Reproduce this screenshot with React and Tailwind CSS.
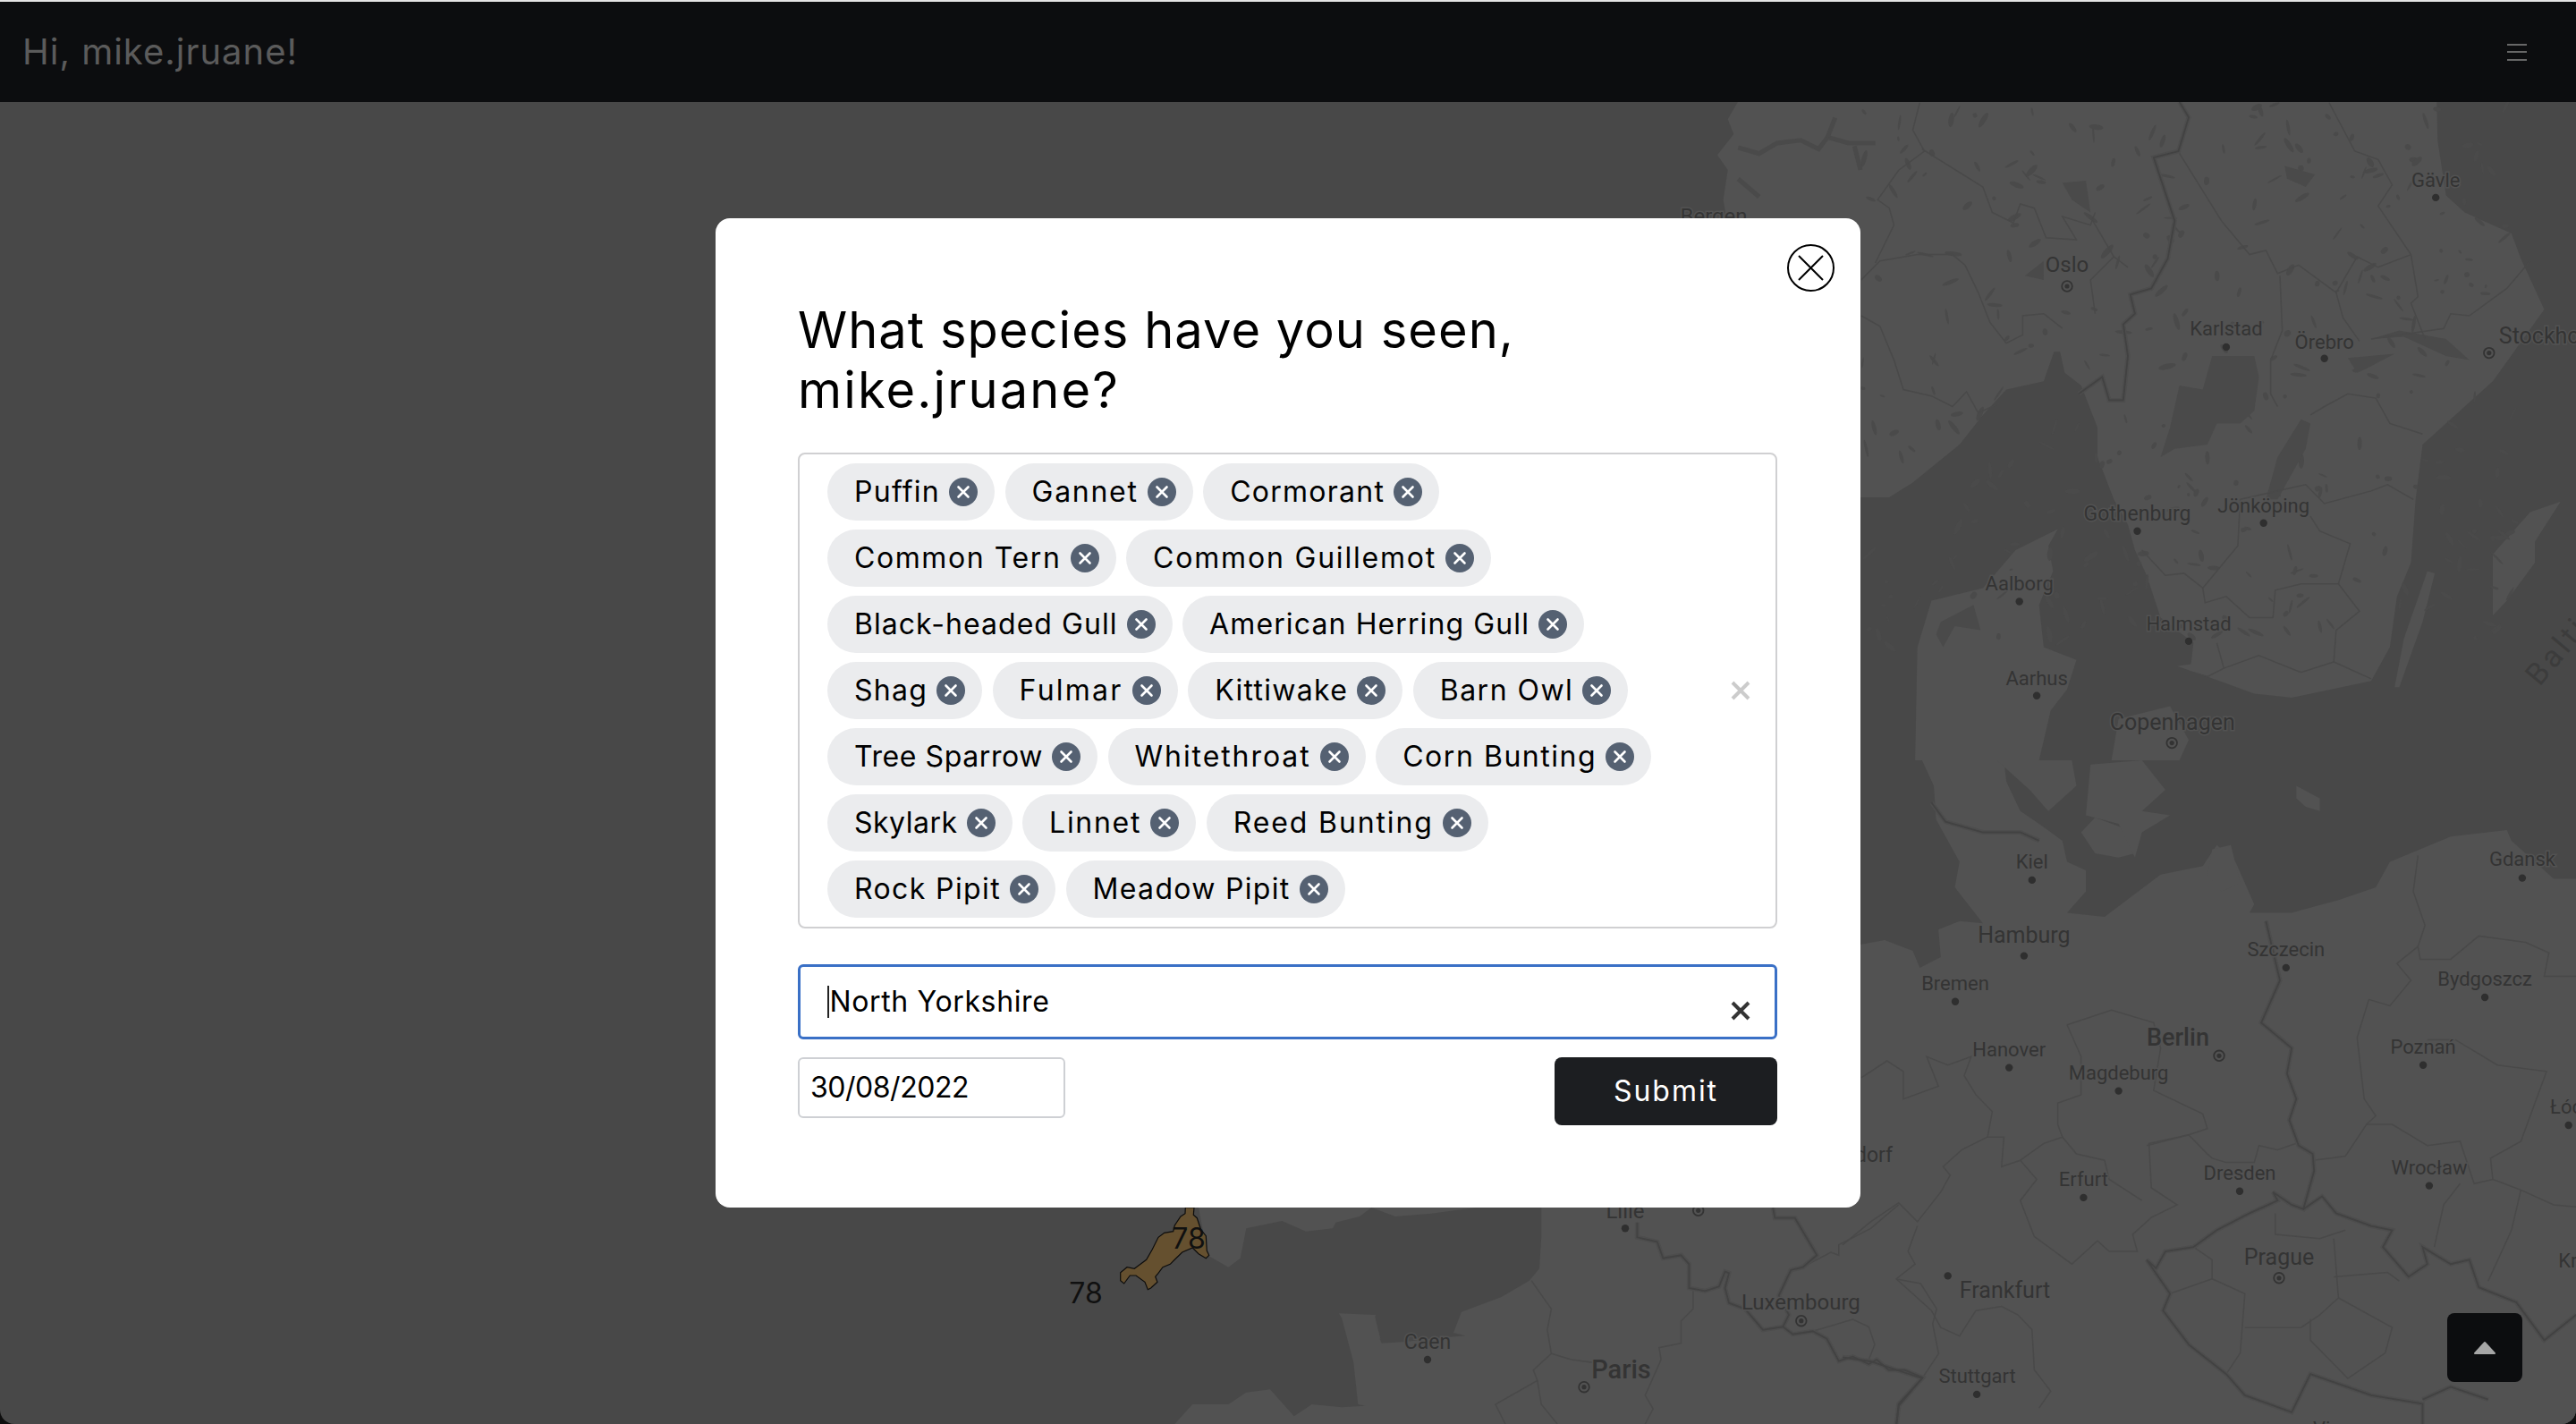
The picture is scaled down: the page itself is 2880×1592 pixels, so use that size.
import React from "react";

const Z5 = [2060, 110, 1.912, 2.119];
const Z6 = [2060, 850, 1.912, 2.113];
const Z7 = [1100, 1340, 3, 3];
const Z10 = [1500, 1340, 2.24, 3];
const Z11 = [1800, 110, 3, 3];

const conv = (z, a) => {
  const out = [];
  for (let i = 0; i < a.length; i += 2) {
    out.push([+(z[0] + a[i] / z[2]).toFixed(1), +(z[1] + a[i + 1] / z[3]).toFixed(1)]);
  }
  return out;
};
const str = (p) => p.map((q) => q.join(",")).join(" ");

const LAND = "#525252";
const SEA = "#484848";

const scand = [
  ...conv(Z11, [430, 10, 395, 70, 415, 120, 360, 190, 395, 240, 380, 340, 390, 400]),
  [1925, 500],
  ...conv(Z5, [38, 945, 100, 945, 150, 910, 250, 820, 300, 750, 350, 690, 430, 670, 452, 600, 465, 600, 475, 650, 510, 680, 545, 780, 545, 850, 580, 950, 610, 1010, 625, 1070, 650, 1130, 680, 1230, 750, 1290, 745, 1340, 715, 1345, 780, 1370, 880, 1410, 960, 1420, 1130, 1380, 1170, 1300, 1185, 1180, 1215, 1100, 1225, 950, 1240, 820, 1340, 720, 1390, 670, 1500, 500, 1450, 380, 1430, 320, 1330, 270, 1290, 230, 1272, 100, 1270, 0]),
];

const lands = [
  scand,
  conv(Z5, [155, 1568, 160, 1300, 190, 1190, 300, 1160, 370, 1070, 460, 1020, 440, 1060, 450, 1120, 420, 1200, 430, 1300, 500, 1330, 480, 1400, 445, 1450, 420, 1568]),
  conv(Z5, [575, 1568, 590, 1470, 700, 1440, 740, 1520, 720, 1568]),
  conv(Z5, [1180, 1395, 1200, 1280, 1250, 1120, 1266, 1125, 1240, 1240, 1190, 1395]),
  conv(Z5, [1390, 1225, 1390, 1080, 1470, 980, 1535, 955, 1480, 1050, 1480, 1100, 1420, 1190]),
  conv(Z6, [38, 435, 90, 425, 150, 450, 165, 490, 210, 465, 205, 400, 250, 380, 300, 385, 240, 300, 250, 240, 200, 140, 195, 60, 170, 0, 345, 0, 350, 50, 380, 120, 420, 150, 470, 190, 480, 240, 520, 260, 520, 310, 480, 360, 560, 370, 680, 270, 770, 250, 800, 200, 840, 240, 880, 340, 870, 360, 960, 360, 1060, 330, 1140, 300, 1170, 240, 1300, 180, 1420, 165, 1430, 190, 1520, 280, 1568, 280, 1568, 1568, 0, 1568, 0, 1000, 38, 1000]),
  conv(Z6, [510, 170, 540, 135, 600, 160, 625, 220, 590, 230, 540, 220]),
  conv(Z6, [330, 0, 490, 0, 500, 60, 440, 120, 400, 70]),
  conv(Z6, [530, 10, 640, 0, 690, 70, 640, 120, 700, 130, 640, 170, 625, 230, 590, 150, 520, 130]),
  conv(Z6, [970, 60, 1020, 90, 1020, 120, 990, 110, 970, 90]),
  conv(Z6, [790, 210, 830, 200, 850, 290, 810, 310, 780, 270]),
  // England, south coast
  conv(Z7, [690, 20, 720, 30, 750, 190, 820, 230, 860, 200, 880, 100, 1000, 75, 1080, 110, 1170, 100, 1180, 80, 1260, 60, 1300, 30, 1380, 60, 1500, 50, 1800, 10, 1800, 0, 690, 0]),
  // France
  [
    ...conv(Z10, [500, 0, 500, 130, 495, 235, 470, 275, 400, 330, 300, 380, 280, 450, 310, 460, 220, 470, 160, 480, 100, 485, 80, 420, 85, 390, 40, 395, 0, 390]),
    ...conv(Z7, [1330, 470, 1310, 390, 1190, 385, 1200, 400, 1240, 550, 1255, 690, 1280, 695, 1200, 700, 1100, 690, 1040, 730, 960, 640, 880, 650, 820, 690, 700, 690, 640, 756]),
    [1700, 1592],
    [2100, 1592],
    [2100, 1300],
    [1720, 1300],
  ],
];

const waters = [
  conv(Z5, [680, 850, 700, 780, 720, 680, 770, 690, 790, 610, 880, 610, 890, 660, 880, 740, 850, 770, 800, 770, 780, 820, 710, 830]),
  conv(Z5, [905, 950, 930, 850, 980, 760, 1000, 770, 990, 830, 960, 890, 930, 950]),
  conv(Z5, [1100, 650, 1080, 615, 1180, 605, 1120, 640]),
  conv(Z5, [1130, 570, 1190, 550, 1290, 570, 1340, 620, 1290, 610, 1200, 565]),
  conv(Z5, [210, 1240, 280, 1200, 295, 1260, 240, 1250, 215, 1300, 200, 1270]),
  conv(Z5, [390, 420, 430, 385, 430, 430]),
  conv(Z5, [470, 200, 520, 195, 530, 270, 490, 240]),
  conv(Z5, [945, 160, 1010, 180, 990, 210, 950, 190]),
];

const heavy = [
  conv(Z5, [720, 8, 740, 45, 718, 125, 665, 140, 710, 290, 695, 380, 660, 450, 615, 465, 625, 510, 600, 535, 610, 610, 600, 715, 570, 715, 555, 660, 505, 700]),
  conv(Z6, [905, 380, 935, 520, 895, 620, 960, 680, 950, 740, 970, 800, 955, 850, 975, 910, 1005, 930, 1008, 970, 985, 1060, 960, 1050, 920, 1020, 930, 1040, 870, 1070, 800, 1110, 750, 1150, 690, 1160, 670, 1200, 650, 1180, 700, 1260, 685, 1300, 740, 1380, 820, 1450, 860, 1500, 960, 1540, 1000, 1450, 1130, 1500, 1240, 1520, 1240, 1568]),
  conv(Z6, [985, 1060, 1025, 1030, 1055, 1070, 1130, 1100, 1175, 1110, 1155, 1150, 1210, 1220, 1250, 1190, 1240, 1150, 1300, 1190, 1340, 1180, 1360, 1245, 1440, 1280, 1500, 1370, 1568, 1310]),
  conv(Z6, [1240, 1510, 1300, 1480, 1380, 1510]),
  conv(Z6, [190, 100, 220, 145, 300, 170, 380, 170, 420, 190]),
  conv(Z6, [0, 1410, 60, 1420, 170, 1460, 120, 1520, 115, 1568]),
  conv(Z10, [740, 80, 740, 130, 790, 145, 805, 200, 850, 190, 870, 220, 870, 300, 910, 310, 945, 295, 960, 245, 970, 250, 960, 300, 970, 350, 1010, 370, 1055, 440, 1105, 430, 1130, 455, 1180, 445, 1215, 470, 1245, 545, 1280, 530, 1320, 555, 1340, 540, 1370, 575, 1410, 575, 1455, 600, 1395, 695, 1390, 756]),
  conv(Z10, [1080, 30, 1085, 65, 1135, 65, 1190, 190, 1155, 230, 1125, 240, 1095, 325, 1120, 390, 1105, 430]),
];

const thin = [
  conv(Z5, [170, 120, 300, 210, 320, 270, 365, 295, 380, 250, 410, 260, 435, 330, 500, 335, 470, 280, 530, 300, 540, 270]),
  conv(Z5, [40, 430, 80, 385, 160, 370, 235, 370, 262, 395, 290, 460, 315, 530, 350, 580, 385, 560, 385, 515, 430, 510, 470, 545]),
  conv(Z5, [70, 390, 110, 300, 100, 260, 75, 240, 120, 170, 175, 125, 150, 75, 165, 10]),
  conv(Z5, [40, 515, 80, 540, 110, 620, 130, 690, 190, 705, 235, 730, 265, 695, 290, 745, 340, 720]),
  conv(Z5, [610, 400, 580, 375, 530, 430, 540, 510]),
  conv(Z5, [580, 375, 535, 290]),
  conv(Z5, [720, 130, 810, 290, 870, 370, 905, 360, 930, 415, 975, 395, 1055, 460, 1100, 375, 1145, 400, 1215, 370]),
  conv(Z5, [1040, 10, 1095, 125, 1145, 145, 1175, 205, 1145, 255, 1215, 370, 1230, 470, 1215, 485, 1245, 570]),
  conv(Z5, [1055, 460, 1070, 520, 1105, 575]),
  conv(Z5, [935, 420, 940, 550, 915, 620, 915, 700, 930, 730]),
  conv(Z5, [1340, 515, 1420, 450, 1470, 385]),
  conv(Z5, [1130, 570, 1285, 545, 1300, 510, 1340, 515]),
  conv(Z5, [1000, 750, 1030, 730, 1080, 700, 1140, 710, 1170, 770, 1240, 795]),
  conv(Z5, [850, 950, 990, 915, 1030, 960, 1130, 930, 1165, 915, 1220, 950]),
  conv(Z5, [850, 950, 845, 1060, 770, 1160, 775, 1195, 820, 1180, 870, 1230, 920, 1230, 925, 1165, 980, 1150, 1060, 1150, 1105, 1215, 1055, 1260, 1050, 1335, 1130, 1375]),
  conv(Z5, [640, 1070, 690, 1130, 730, 1125, 770, 1160]),
  conv(Z5, [1000, 990, 1020, 1025, 1085, 1055, 1060, 1150]),
  conv(Z5, [800, 1290, 815, 1350, 890, 1320, 980, 1360, 1050, 1335]),
  conv(Z5, [750, 1360, 780, 1370, 815, 1350]),
  conv(Z6, [480, 625, 575, 590, 665, 620, 680, 680, 665, 780, 770, 835, 780, 870, 740, 885, 655, 905, 660, 1010, 715, 1050, 660, 1080, 620, 1120, 630, 1160, 570, 1160, 545, 1135, 490, 1190, 410, 1125, 380, 1040, 415, 990, 380, 945, 430, 905, 470, 890, 500, 930, 560, 945, 570, 990, 640, 1040]),
  conv(Z6, [480, 625, 510, 700, 510, 790, 460, 810, 460, 860, 470, 890]),
  conv(Z6, [380, 945, 340, 960, 345, 890, 310, 890, 320, 830, 285, 790, 260, 745, 275, 700, 225, 720, 180, 700, 205, 770, 130, 800, 130, 735, 95, 710, 40, 750]),
  conv(Z6, [0, 1145, 60, 1090, 120, 1045, 160, 1090, 210, 1020, 230, 980, 215, 960, 255, 920, 310, 890]),
  conv(Z6, [160, 1100, 140, 1160, 155, 1190, 115, 1225, 190, 1300, 210, 1340, 250, 1360, 285, 1300, 340, 1290, 375, 1310, 405, 1345, 410, 1440, 445, 1490, 420, 1530]),
  conv(Z6, [650, 910, 740, 885, 780, 930, 790, 940, 820, 950, 880, 950, 890, 910, 930, 920, 970, 905]),
  conv(Z6, [1005, 945, 1040, 940, 1075, 935, 1120, 860, 1175, 860, 1250, 910, 1320, 900, 1350, 1000, 1390, 990, 1450, 1015, 1520, 1050, 1568, 1055]),
  conv(Z6, [1125, 565, 1100, 655, 1115, 800, 1140, 840, 1120, 860]),
  conv(Z6, [1230, 440, 1235, 470, 1300, 470, 1360, 415, 1460, 430, 1510, 455, 1500, 510, 1568, 510]),
  conv(Z6, [1230, 225, 1220, 310, 1245, 390, 1230, 440, 1185, 480, 1215, 520, 1170, 580, 1125, 565]),
  conv(Z6, [1250, 660, 1310, 660, 1400, 720, 1505, 735, 1450, 900, 1385, 940, 1390, 990]),
  conv(Z6, [1320, 1000, 1285, 1050, 1265, 1150]),
  conv(Z6, [1450, 1015, 1430, 1110, 1380, 1230]),
  conv(Z6, [925, 1070, 925, 1120, 1020, 1130, 1075, 1110]),
  conv(Z6, [750, 1150, 790, 1180, 790, 1225, 700, 1260]),
  conv(Z6, [790, 1225, 860, 1260, 850, 1400, 820, 1450]),
  conv(Z6, [1050, 1220, 1165, 1210, 1190, 1230]),
  conv(Z6, [1050, 1130, 1060, 1270, 1020, 1310, 980, 1340, 860, 1340]),
  conv(Z6, [1060, 1270, 1175, 1340, 1160, 1400, 1080, 1460, 1000, 1370, 1000, 1320]),
  conv(Z10, [475, 275, 525, 370, 515, 440, 525, 520, 480, 575, 490, 610, 385, 690, 410, 756]),
  conv(Z10, [525, 520, 575, 540, 630, 550]),
  conv(Z10, [490, 610, 500, 690, 540, 756]),
  conv(Z10, [880, 310, 880, 370, 850, 410, 850, 485, 795, 500, 800, 540, 770, 630, 760, 660, 780, 705, 760, 756]),
  conv(Z10, [1180, 445, 1280, 405, 1320, 430, 1335, 490, 1320, 540]),
  conv(Z10, [1155, 230, 1225, 180, 1245, 190, 1245, 155, 1325, 100, 1395, 20]),
  conv(Z10, [1390, 270, 1450, 285, 1490, 370, 1480, 420, 1495, 520, 1455, 600]),
];

const fjords = [
  conv(Z11, [430, 165, 500, 185, 560, 150, 640, 140, 700, 170, 730, 130, 800, 150, 890, 150]),
  conv(Z11, [430, 270, 500, 330]),
  conv(Z11, [730, 130, 755, 65]),
  conv(Z11, [820, 160, 840, 240]),
];

// Small lakes scattered over Scandinavia.
const specks = (() => {
  let s = 12345;
  const r = () => {
    s = (s * 1103515245 + 12345) % 2147483648;
    return s / 2147483648;
  };
  const list = [];
  for (let i = 0; i < 340; i++) {
    const [[x, y]] = conv(Z5, [40 + r() * 1400, 10 + r() * 1300]);
    list.push({ x, y, rx: 2 + r() * 8, ry: 1 + r() * 2.2, a: r() * 180 });
  }
  return list;
})();

const labels = [
  [Z5, "Gävle", 1268, 197, 22], [Z5, "Oslo", 480, 398, 24], [Z5, "Karlstad", 820, 550, 22],
  [Z5, "Örebro", 1030, 580, 22], [Z5, "Gothenburg", 630, 987, 23], [Z5, "Jönköping", 900, 968, 22],
  [Z5, "Aalborg", 378, 1153, 22], [Z5, "Halmstad", 740, 1248, 22], [Z5, "Aarhus", 415, 1378, 22],
  [Z5, "Copenhagen", 705, 1482, 25],
  [Z6, "Kiel", 405, 243, 22], [Z6, "Gdansk", 1453, 237, 22], [Z6, "Hamburg", 388, 418, 25],
  [Z6, "Szczecin", 948, 450, 22], [Z6, "Bremen", 241, 530, 22], [Z6, "Bydgoszcz", 1373, 520, 22],
  [Z6, "Hanover", 356, 688, 22], [Z6, "Poznań", 1241, 680, 22], [Z6, "Magdeburg", 590, 743, 22],
  [Z6, "Łódź", 1558, 823, 22], [Z6, "Erfurt", 515, 993, 22], [Z6, "Dresden", 849, 978, 22],
  [Z6, "Wrocław", 1254, 965, 22], [Z6, "Prague", 933, 1178, 25], [Z6, "Frankfurt", 347, 1255, 25],
  [Z6, "Kraków", 1600, 1185, 22], [Z6, "Stuttgart", 288, 1458, 22], [Z6, "Vienna", 1070, 1582, 22],
  [Z10, "Luxembourg", 1150, 353, 24], [Z10, "Lille", 710, 48, 24], [Z10, "Caen", 215, 485, 23],
  [Z11, "Bergen", 348, 400, 24],
];
const boldLabels = [[Z6, "Berlin", 717, 658, 27], [Z10, "Paris", 700, 580, 29]];

const dots = [
  ...conv(Z5, [1268, 235, 820, 589, 1030, 616, 630, 1025, 900, 1006, 378, 1192, 740, 1286, 415, 1415]),
  ...conv(Z6, [405, 283, 1453, 278, 388, 462, 948, 490, 241, 570, 1373, 560, 356, 726, 1241, 720, 590, 781, 1552, 862, 515, 1033, 849, 1018, 1254, 1005, 225, 1218, 287, 1498]),
  ...conv(Z10, [710, 100, 215, 540]),
];
const capitals = [
  ...conv(Z5, [480, 445, 1382, 603, 704, 1527]),
  ...conv(Z6, [805, 698, 933, 1223]),
  ...conv(Z10, [1151, 410, 607, 632, 893, 40]),
];

const cornwall = conv(Z7, [676, 30, 705, 30, 703, 55, 715, 65, 728, 105, 745, 125, 748, 175, 755, 190, 745, 200, 720, 185, 700, 165, 665, 180, 640, 205, 625, 220, 600, 230, 585, 250, 575, 262, 582, 280, 560, 300, 550, 305, 540, 280, 510, 258, 490, 258, 470, 285, 458, 275, 458, 248, 480, 230, 505, 235, 545, 205, 565, 170, 585, 130, 605, 115, 635, 110, 640, 90, 660, 60, 675, 50]);

const at = (z, x, y) => conv(z, [x, y])[0];

function MapLayer() {
  const MAP_FONT = "Roboto, sans-serif";
  const text = { fontFamily: MAP_FONT, fill: "#343434", stroke: LAND, strokeWidth: 3, paintOrder: "stroke", textAnchor: "middle", dominantBaseline: "middle" };
  const stockholm = at(Z5, 1403, 567);
  const dorf = at(Z6, 107, 937);
  const baltic = at(Z5, 1490, 1395);
  return (
    <svg className="absolute inset-0 w-full h-full" viewBox="0 0 2880 1592">
      <rect x="0" y="0" width="2880" height="1592" fill={SEA} />
      {lands.map((p, i) => <polygon key={i} points={str(p)} fill={LAND} />)}
      {specks.map((d, i) => (
        <ellipse key={i} cx={d.x} cy={d.y} rx={d.rx} ry={d.ry} fill="#4a4a4a" transform={`rotate(${d.a} ${d.x} ${d.y})`} />
      ))}
      {waters.map((p, i) => <polygon key={i} points={str(p)} fill="#4a4a4a" />)}
      {fjords.map((p, i) => <polyline key={i} points={str(p)} fill="none" stroke="#4a4a4a" strokeWidth="5" />)}
      {thin.map((p, i) => <polyline key={i} points={str(p)} fill="none" stroke="#494949" strokeWidth="1.5" />)}
      {heavy.map((p, i) => <polyline key={i} points={str(p)} fill="none" stroke="#4d4d4d" strokeWidth="5" />)}
      {heavy.map((p, i) => <polyline key={i} points={str(p)} fill="none" stroke="#424242" strokeWidth="1.8" />)}
      {dots.map(([x, y], i) => <circle key={i} cx={x} cy={y} r="4.2" fill="#2f2f2f" />)}
      {capitals.map(([x, y], i) => (
        <g key={i}>
          <circle cx={x} cy={y} r="5.8" fill="none" stroke="#333333" strokeWidth="1.8" />
          <circle cx={x} cy={y} r="2.6" fill="#333333" />
        </g>
      ))}
      {labels.map(([z, t, x, y, s]) => {
        const [px, py] = at(z, x, y);
        return <text key={t} x={px} y={py} fontSize={s} {...text}>{t}</text>;
      })}
      {boldLabels.map(([z, t, x, y, s]) => {
        const [px, py] = at(z, x, y);
        return <text key={t} x={px} y={py} fontSize={s} fontWeight="500" {...text}>{t}</text>;
      })}
      <text x={stockholm[0]} y={stockholm[1]} fontSize="25" {...text} textAnchor="start">Stockholm</text>
      <text x={dorf[0]} y={dorf[1]} fontSize="23" {...text} textAnchor="end">Düsseldorf</text>
      <text x={baltic[0]} y={baltic[1]} fontSize="34" letterSpacing="4" fontFamily={MAP_FONT} fill="#3c3c3c" transform={`rotate(-50 ${baltic[0]} ${baltic[1]})`}>Baltic Sea</text>
      <polygon points={str(cornwall)} fill="#65502f" stroke="#0d0d0d" strokeWidth="1.2" />
      <text x="1329" y="1387" fontSize="32" fill="#101010" textAnchor="middle" dominantBaseline="middle" fontFamily="Inter, sans-serif">78</text>
      <text x="1214" y="1448" fontSize="32" fill="#101010" textAnchor="middle" dominantBaseline="middle" fontFamily="Inter, sans-serif">78</text>
    </svg>
  );
}

// The reference's typeface runs wider than Inter by an amount that varies per word,
// so the tracking is computed from the measured width of each string.
let measureCtx = null;
function tracking(text, target, size, weight = 400) {
  if (!measureCtx) measureCtx = document.createElement("canvas").getContext("2d");
  measureCtx.font = `${weight} ${size}px Inter`;
  return (target - measureCtx.measureText(text).width) / text.length;
}

function Fit({ text, width, size, weight, className }) {
  return (
    <span className={className} style={{ letterSpacing: `${tracking(text, width, size, weight)}px` }}>
      {text}
    </span>
  );
}

// [name, chip width in the reference]
const species = [
  [["Puffin", 187], ["Gannet", 210], ["Cormorant", 264]],
  [["Common Tern", 322.5], ["Common Guillemot", 408]],
  [["Black-headed Gull", 385.5], ["American Herring Gull", 449]],
  [["Shag", 173], ["Fulmar", 207], ["Kittiwake", 240], ["Barn Owl", 240.5]],
  [["Tree Sparrow", 302], ["Whitethroat", 288], ["Corn Bunting", 308]],
  [["Skylark", 206.5], ["Linnet", 194], ["Reed Bunting", 315]],
  [["Rock Pipit", 255], ["Meadow Pipit", 312]],
];

function ChipX() {
  return (
    <svg width="32" height="32" viewBox="0 0 32 32" className="shrink-0">
      <circle cx="16" cy="16" r="16" fill="#556172" />
      <path d="M10.5 10.5 L21.5 21.5 M21.5 10.5 L10.5 21.5" stroke="#ffffff" strokeWidth="2.6" strokeLinecap="round" />
    </svg>
  );
}

function Chip({ name, width }) {
  return (
    <div className="flex h-[64px] items-center gap-[10px] rounded-[32px] bg-[#ebecee] pl-[30px] pr-[19px] text-[32px] text-black">
      <Fit text={name} width={width - 91} size={32} className="whitespace-nowrap" />
      <ChipX />
    </div>
  );
}

function SmallX({ color }) {
  return (
    <svg width="22" height="22" viewBox="0 0 22 22">
      <path d="M2 2 L20 20 M20 2 L2 20" stroke={color} strokeWidth="4" />
    </svg>
  );
}

function Modal() {
  return (
    <div className="relative h-[1106px] w-[1280px] rounded-[16px] bg-white px-[92px] pt-[92px]">
      <button className="absolute left-[1198px] top-[29px] flex h-[53px] w-[53px] items-center justify-center rounded-full border-2 border-black bg-white">
        <svg width="33" height="33" viewBox="0 0 33 33">
          <path d="M3 3 L30 30 M30 3 L3 30" stroke="#000000" strokeWidth="2" />
        </svg>
      </button>
      <h2 className="m-0 flex flex-col text-[56px] leading-[67px] font-normal text-black">
        <Fit text="What species have you seen," width={801} size={56} />
        <Fit text="mike.jruane?" width={360} size={56} />
      </h2>
      <div className="relative mt-[36px] h-[532px] w-[1095px] rounded-[8px] border-2 border-[#d0d0d2] pl-[31px] pt-[10px]">
        <div className="flex flex-col gap-[10px]">
          {species.map((row) => (
            <div key={row[0][0]} className="flex gap-[11.6px]">
              {row.map(([n, w]) => <Chip key={n} name={n} width={w} />)}
            </div>
          ))}
        </div>
        <div className="absolute left-[1041px] top-[253px] flex"><SmallX color="#cccccc" /></div>
      </div>
      <div className="relative mt-[40px] flex h-[84px] w-[1095px] items-center rounded-[6px] border-[3px] border-[#3a70c6] pl-[30px] text-[32px] text-black">
        <span className="mr-[1px] h-[36px] w-[1.5px] bg-[#222222]" />
        <Fit text="North Yorkshire" width={246} size={32} className="-mt-[1px]" />
        <div className="absolute left-[1040px] top-[38px] flex"><SmallX color="#333333" /></div>
      </div>
      <div className="mt-[20px] flex w-[1095px] items-start justify-between">
        <div className="flex h-[68px] w-[299px] items-center rounded-[6px] border-2 border-[#ced0d4] pl-[12px] text-[32px] text-black">
          <Fit text="30/08/2022" width={177} size={32} />
        </div>
        <button className="flex h-[76px] w-[249px] items-center justify-center rounded-[8px] bg-[#1c1e21] text-[32px] font-normal text-white">
          <Fit text="Submit" width={117} size={32} />
        </button>
      </div>
    </div>
  );
}

export default function App() {
  return (
    <div className="relative h-[1592px] w-[2880px] overflow-hidden bg-[#0e0e0e] font-['Inter',sans-serif]">
      <div className="absolute inset-0 overflow-hidden rounded-b-[16px]">
        <MapLayer />
      </div>
      <div className="relative h-[2px] bg-[#e4e4e4]" />
      <nav className="relative flex h-[112px] items-center justify-between bg-[#0c0d0f] pl-[25px] pr-[55px]">
        <Fit text="Hi, mike.jruane!" width={308} size={40} className="text-[40px] text-[#5b5b5b]" />
        <div className="flex w-[22px] flex-col gap-[6.5px]">
          <span className="h-[2px] bg-[#676767]" />
          <span className="h-[2px] bg-[#676767]" />
          <span className="h-[2px] bg-[#676767]" />
        </div>
      </nav>
      <div className="absolute inset-0 flex justify-center pt-[244px]">
        <Modal />
      </div>
      <button className="absolute left-[2736px] top-[1468px] flex h-[77px] w-[84px] items-center justify-center rounded-[8px] bg-[#0c0d0f]">
        <svg width="26" height="16" viewBox="0 0 26 16">
          <path d="M13 2 L24 14 L2 14 Z" fill="#a6a6a6" stroke="#a6a6a6" strokeWidth="2" strokeLinejoin="round" />
        </svg>
      </button>
    </div>
  );
}
